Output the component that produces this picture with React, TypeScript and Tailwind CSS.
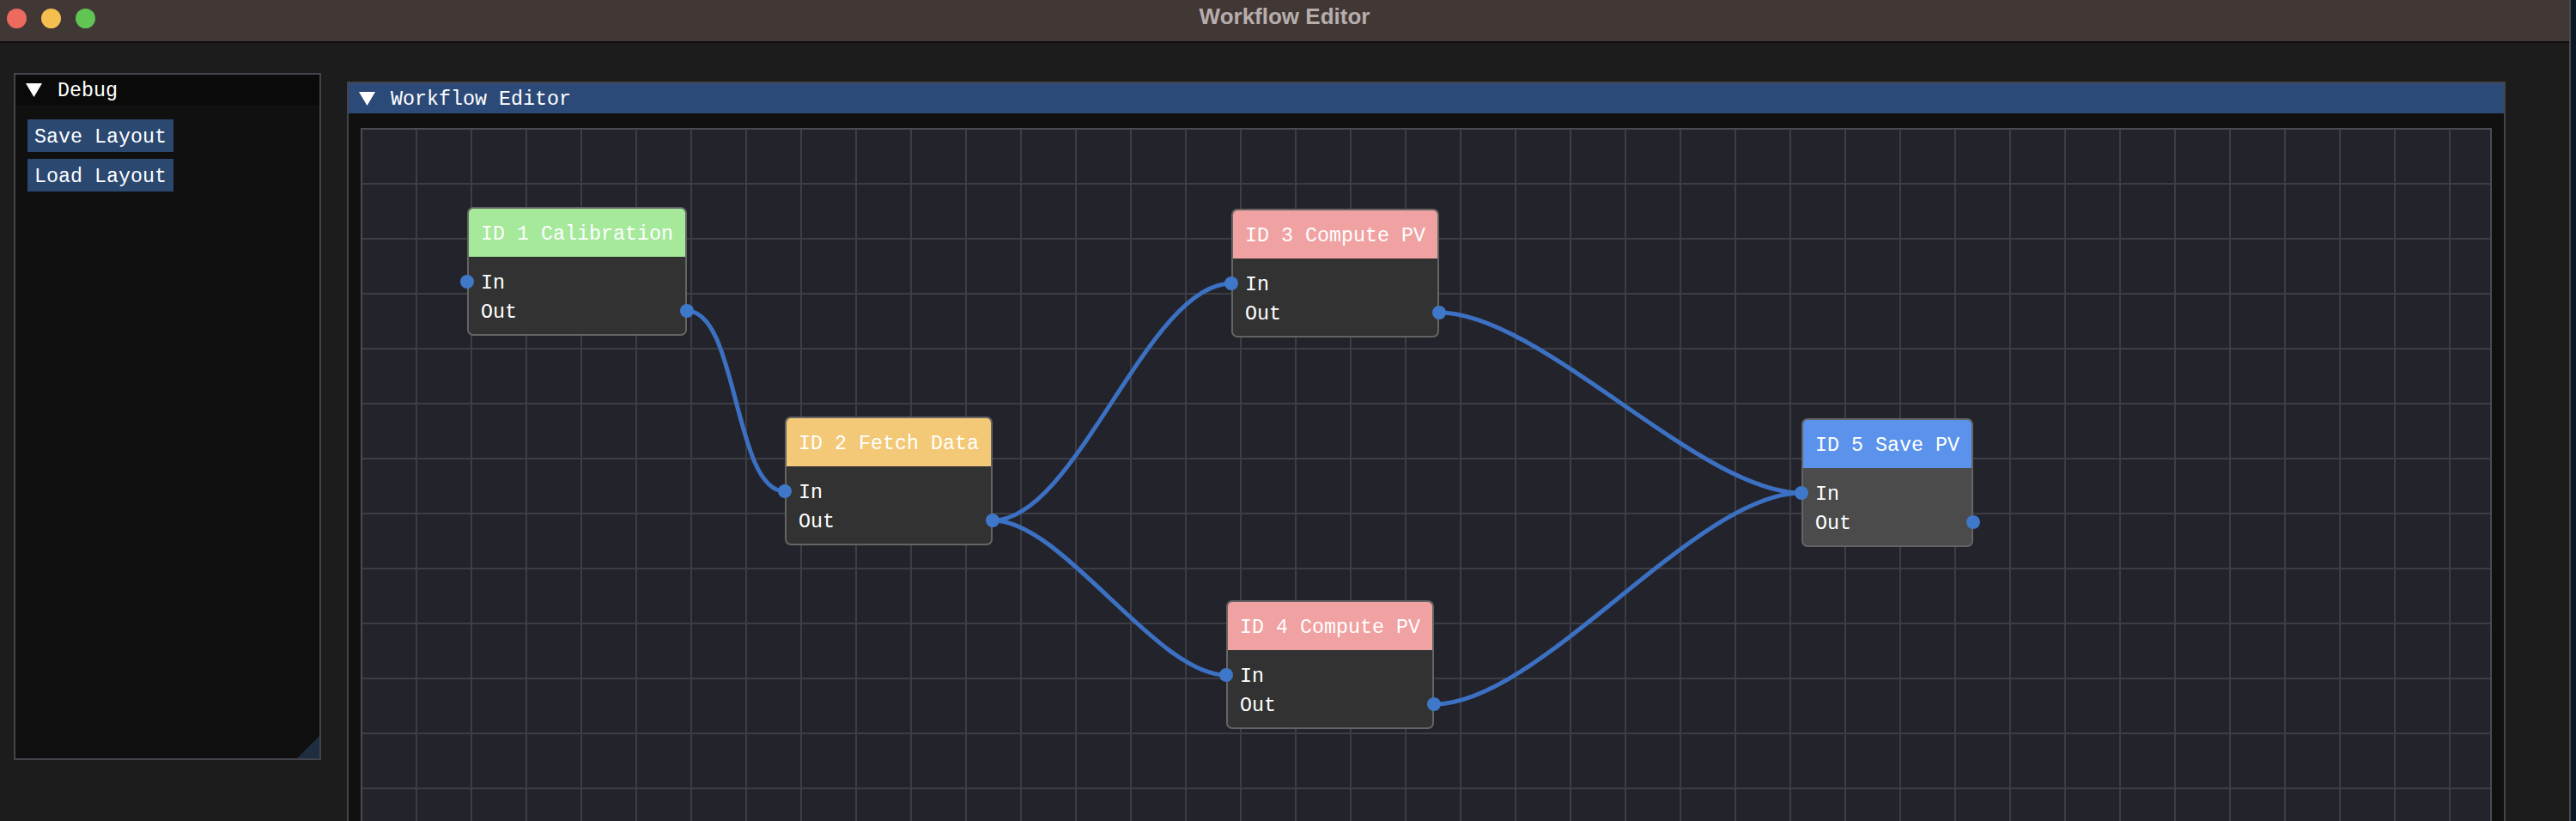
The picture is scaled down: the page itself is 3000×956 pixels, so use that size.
import React from "react";

//types
type GraphNode = {
  id: number;
  title: string;
  x: number;
  y: number;
  headerClass: string;
  bodyClass: string;
};

//data
const nodes: GraphNode[] = [
  { id: 1, title: "ID 1 Calibration", x: 122, y: 90, headerClass: "bg-[#a6e99b]", bodyClass: "bg-[#323232]" },
  { id: 2, title: "ID 2 Fetch Data", x: 492, y: 334, headerClass: "bg-[#f3c977]", bodyClass: "bg-[#323232]" },
  { id: 3, title: "ID 3 Compute PV", x: 1012, y: 92, headerClass: "bg-[#f0a2a2]", bodyClass: "bg-[#323232]" },
  { id: 4, title: "ID 4 Compute PV", x: 1006, y: 548, headerClass: "bg-[#f0a2a2]", bodyClass: "bg-[#323232]" },
  { id: 5, title: "ID 5 Save PV", x: 1676, y: 336, headerClass: "bg-[#5b93ec]", bodyClass: "bg-[#4b4b4b]" },
];

const links: [number, number][] = [
  [1, 2],
  [2, 3],
  [2, 4],
  [3, 5],
  [4, 5],
];

// node geometry (imnodes style, 2x scale)
const CHAR_W = 14;
const nodeWidth = (n: GraphNode) => n.title.length * CHAR_W + 32;
const inPin = (n: GraphNode) => ({ x: n.x, y: n.y + 87 });
const outPin = (n: GraphNode) => ({ x: n.x + nodeWidth(n), y: n.y + 121 });

const linkPath = (from: GraphNode, to: GraphNode) => {
  const a = outPin(from);
  const b = inPin(to);
  const len = Math.hypot(b.x - a.x, b.y - a.y);
  const o = len * 0.25;
  return `M ${a.x} ${a.y} C ${a.x + o} ${a.y}, ${b.x - o} ${b.y}, ${b.x} ${b.y}`;
};

// mono text sits a bit high in its line box, nudge it to match the pixel font
function Txt({ children }: { children: React.ReactNode }) {
  return <span className="inline-block translate-y-[2px]">{children}</span>;
}

function Arrow() {
  return (
    <svg width="19" height="16" viewBox="0 0 19 16" className="shrink-0">
      <polygon points="0,0 19,0 9.5,16" fill="#ffffff" />
    </svg>
  );
}

function TitleBar() {
  return (
    <div className="grid h-[50px] shrink-0 grid-cols-[1fr_auto_1fr] items-center border-b-2 border-[#0e0e0e] bg-[#413836]">
      <div className="flex items-center gap-[17px] pb-[6px] pl-[8px]">
        <span className="h-[23px] w-[23px] rounded-full bg-[#ec6a5e]" />
        <span className="h-[23px] w-[23px] rounded-full bg-[#f4bf4f]" />
        <span className="h-[23px] w-[23px] rounded-full bg-[#61c554]" />
      </div>
      <div className="pb-[9px] font-['Liberation_Sans',sans-serif] text-[26px] font-bold text-[#b7aeab]">
        Workflow Editor
      </div>
      <div />
    </div>
  );
}

function NodeBox({ node }: { node: GraphNode }) {
  return (
    <div
      className="absolute"
      style={{ left: node.x, top: node.y, width: nodeWidth(node) }}
    >
      <div className={`overflow-hidden rounded-[7px] border-2 border-[#646464] ${node.bodyClass}`}>
        <div className={`flex h-[56px] items-center px-[14px] leading-[26px] ${node.headerClass}`}>
          <Txt>{node.title}</Txt>
        </div>
        <div className="flex flex-col gap-[8px] px-[14px] pt-[16px] pb-[14px] leading-[26px]">
          <div className="h-[26px]">
            <Txt>In</Txt>
          </div>
          <div className="h-[26px]">
            <Txt>Out</Txt>
          </div>
        </div>
      </div>
      {/* pins */}
      <span className="absolute left-[-8px] top-[79px] h-[16px] w-[16px] rounded-full bg-[#3f78c8]" />
      <span className="absolute right-[-8px] top-[113px] h-[16px] w-[16px] rounded-full bg-[#3f78c8]" />
    </div>
  );
}

function DebugWindow() {
  return (
    <div className="relative flex h-[800px] w-[358px] shrink-0 flex-col border-2 border-[#43434b] bg-[#101010]">
      <div className="flex h-[35px] items-center gap-[18px] bg-[#0a0a0a] pl-[12px]">
        <Arrow />
        <Txt>Debug</Txt>
      </div>
      <div className="flex flex-col items-start gap-[8px] pl-[14px] pt-[17px]">
        <button className="h-[38px] bg-[#2b4870] px-[8px] leading-[26px] text-white">
          <Txt>Save Layout</Txt>
        </button>
        <button className="h-[38px] bg-[#2b4870] px-[8px] leading-[26px] text-white">
          <Txt>Load Layout</Txt>
        </button>
      </div>
      {/* resize grip */}
      <svg width="26" height="26" className="absolute bottom-0 right-0">
        <polygon points="26,0 26,26 0,26" fill="#1e2d40" />
      </svg>
    </div>
  );
}

function WorkflowWindow() {
  const byId = (id: number) => nodes.find((n) => n.id === id)!;
  return (
    <div className="mt-[10px] flex h-[1000px] w-[2514px] shrink-0 flex-col border-2 border-[#43434b] bg-[#101010]">
      <div className="flex h-[35px] shrink-0 items-center gap-[18px] bg-[#2c4a78] pl-[12px]">
        <Arrow />
        <Txt>Workflow Editor</Txt>
      </div>
      <div className="flex flex-1 flex-col px-[14px] pt-[17px]">
        <div className="relative flex-1 overflow-hidden border-2 border-[#4a4a55] bg-[#23232b]">
          {/* grid */}
          <svg className="absolute inset-0 h-full w-full">
            <defs>
              <pattern id="grid" width="64" height="64" patternUnits="userSpaceOnUse">
                <rect x="62" y="0" width="2" height="64" fill="#3d3d45" />
                <rect x="0" y="62" width="64" height="2" fill="#3d3d45" />
              </pattern>
            </defs>
            <rect width="100%" height="100%" fill="url(#grid)" />
          </svg>

          {/* links */}
          <svg className="absolute inset-0 h-full w-full">
            {links.map(([a, b]) => (
              <path
                key={`${a}-${b}`}
                d={linkPath(byId(a), byId(b))}
                fill="none"
                stroke="#3c70c2"
                strokeWidth={5}
              />
            ))}
          </svg>

          {nodes.map((n) => (
            <NodeBox key={n.id} node={n} />
          ))}
        </div>
      </div>
    </div>
  );
}

export default function App() {
  return (
    <div className="flex h-[956px] w-[3000px] overflow-hidden bg-[#0b1626] font-['Liberation_Mono',monospace] text-[23.33px] text-white">
      <div className="flex w-[2994px] shrink-0 flex-col border-r-2 border-[#4a4a4a] bg-[#1c1c1c]">
        <TitleBar />
        <div className="flex items-start gap-[30px] pl-[16px] pt-[35px]">
          <DebugWindow />
          <WorkflowWindow />
        </div>
      </div>
    </div>
  );
}
